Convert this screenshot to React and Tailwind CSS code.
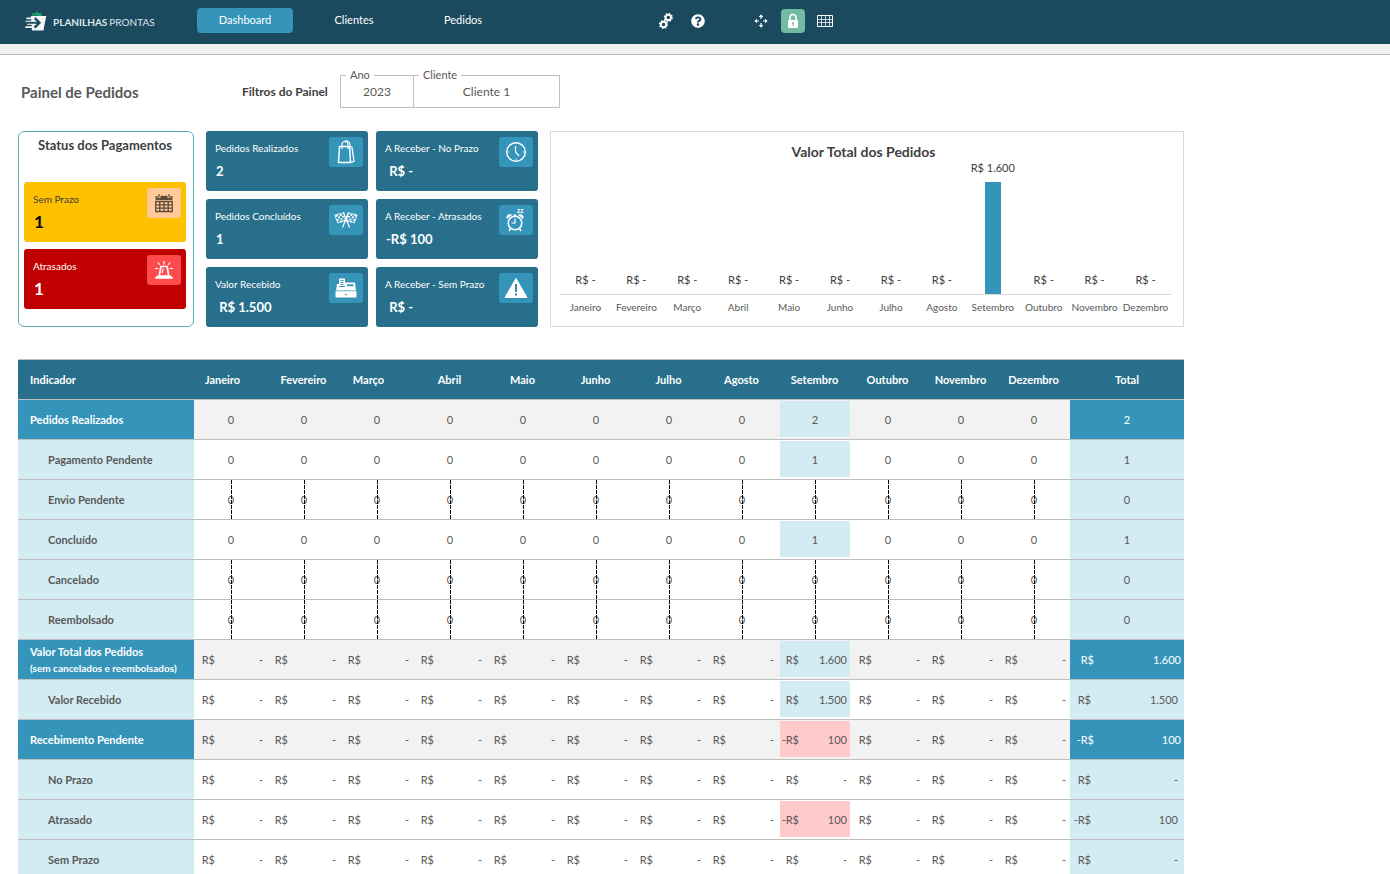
import React, { useState } from "react";
import clsx from "clsx";
import { FaQuestionCircle } from "react-icons/fa";

const MONTHS = [
  "Janeiro",
  "Fevereiro",
  "Março",
  "Abril",
  "Maio",
  "Junho",
  "Julho",
  "Agosto",
  "Setembro",
  "Outubro",
  "Novembro",
  "Dezembro",
];

const SETEMBRO = 8;

const chartValues = MONTHS.map((_, i) => (i === SETEMBRO ? 1600 : 0));

const rows = [
  { label: "Pedidos Realizados", type: "count", value: 2, section: true },
  { label: "Pagamento Pendente", type: "count", value: 1 },
  { label: "Envio Pendente", type: "count", value: 0, struck: true },
  { label: "Concluído", type: "count", value: 1 },
  { label: "Cancelado", type: "count", value: 0, struck: true },
  { label: "Reembolsado", type: "count", value: 0, struck: true },
  {
    label: "Valor Total dos Pedidos",
    note: "(sem cancelados e reembolsados)",
    type: "money",
    value: 1600,
    section: true,
  },
  { label: "Valor Recebido", type: "money", value: 1500 },
  { label: "Recebimento Pendente", type: "money", value: -100, section: true },
  { label: "No Prazo", type: "money", value: 0 },
  { label: "Atrasado", type: "money", value: -100 },
  { label: "Sem Prazo", type: "money", value: 0 },
];

function formatAmount(value) {
  if (value === 0) return "-";
  return String(Math.abs(value)).replace(/\B(?=(\d{3})+$)/g, ".");
}

function LogoIcon() {
  return (
    <svg width="22" height="20" viewBox="0 0 22 20" fill="none">
      <path d="M6.500 4.500 7.500 2 9.500 2.800 11.500.6 13.500 2.200 16 1.500 16.800 5Z" fill="#22a574" />
      <path d="M9 4.500 10.500 3 12 4.500" stroke="#136b55" />
      <path d="M6 5H21.200L18.500 19.500H7Z" fill="#f4f7f8" />
      <path d="M4 11.700H14M9.500 6.800 14.300 11.700 9.500 16.600" stroke="#1b4a5e" strokeWidth="2.600" />
      <path d="M2 7.300H9M1 16.200H8.500" stroke="#f4f7f8" strokeWidth="1.700" strokeLinecap="round" />
      <path d="M.8 10.300H11M2.500 13.300H11" stroke="#f4f7f8" strokeWidth="1.100" strokeLinecap="round" />
    </svg>
  );
}

function GearsIcon() {
  return (
    <svg width="14" height="16" viewBox="0 0 14 16" fill="none" stroke="#fff">
      <circle cx="9.300" cy="4.500" r="2.700" strokeWidth="1.900" />
      <circle cx="9.300" cy="4.500" r="3.900" strokeWidth="1.300" strokeDasharray="1.600 1.460" />
      <circle cx="4.500" cy="11.500" r="2.700" strokeWidth="1.900" />
      <circle cx="4.500" cy="11.500" r="3.900" strokeWidth="1.300" strokeDasharray="1.600 1.460" />
    </svg>
  );
}

function MoveIcon() {
  return (
    <svg width="14" height="14" viewBox="0 0 14 14" fill="#fff">
      <path d="M7 .3 9.300 3H7.600V5H6.400V3H4.700ZM7 13.700 4.700 11H6.400V9H7.600V11H9.300ZM.3 7 3 4.700V6.400H5V7.600H3V9.300ZM13.700 7 11 9.300V7.600H9V6.400H11V4.700Z" />
    </svg>
  );
}

function LockIcon() {
  return (
    <svg width="12" height="16" viewBox="0 0 12 16">
      <path d="M3 8V4.500a3 3 0 0 1 6 0V8" fill="none" stroke="#fff" strokeWidth="1.600" />
      <rect x="1" y="7" width="10" height="8" rx="1" fill="#fff" />
      <circle cx="6" cy="10.200" r="1" fill="#72bba2" />
      <path d="M6 10V13" stroke="#72bba2" strokeWidth="1" />
    </svg>
  );
}

function GridIcon() {
  return (
    <svg width="16" height="12" viewBox="0 0 16 12" fill="none" stroke="#fff">
      <path d="M.5.5H15.500V11.500H.5Z" />
      <path d="M.5 4.500H15.500M.5 7.500H15.500M4.500.5V11.500M8.500.5V11.500M12.500.5V11.500" strokeOpacity=".75" />
    </svg>
  );
}

function CalendarIcon() {
  return (
    <svg width="20" height="20" viewBox="0 0 20 20" fill="none" stroke="#5d4a37">
      <path d="M2 3.500H18V6.500H2Z" fill="#5d4a37" />
      <path d="M5 1V5M15 1V5" stroke="#ffc999" strokeWidth="3" />
      <path d="M5 1V4.500M15 1V4.500M8 2.500V4.500M12 2.500V4.500" strokeWidth="1.200" />
      <path d="M1.700 8.500H18.300V18.500H1.700ZM1.700 11.800H18.300M1.700 15.200H18.300M5.800 8.500V18.500M10 8.500V18.500M14.200 8.500V18.500" strokeWidth="1.300" />
    </svg>
  );
}

function SirenIcon() {
  return (
    <svg width="20" height="20" viewBox="0 0 20 20" fill="none" stroke="#fff">
      <path d="M5.500 15 6.800 6.500H13.200L14.500 15" strokeWidth="1.700" />
      <path d="M9 8.500 8.300 13" strokeWidth="1.200" />
      <path d="M1.500 18.500V17.500L4 15.500H16L18.500 17.500V18.500Z" fill="#fff" strokeWidth=".6" />
      <path d="M10 1V4.500M4 2.500 6 5M16 2.500 14 5M1 8.500H4.500M15.500 8.500H19" strokeWidth="1.200" />
    </svg>
  );
}

function BagIcon() {
  return (
    <svg width="18" height="24" viewBox="0 0 18 24" fill="none" stroke="#fff" strokeLinejoin="round">
      <path d="M2.500 6.500H12.500L13.500 22.500H1.500Z" strokeWidth="1.500" />
      <path d="m12.500 6.500 2.500.8 2 14-3.500 1.200" strokeWidth="1.300" />
      <path d="M5 9V4.500a3 3 0 0 1 6 0V9" strokeWidth="1.200" />
      <path d="M7.500 2C8.500.3 12.500.3 13 4.500V7" strokeWidth="1.100" />
    </svg>
  );
}

function FlagsIcon() {
  return (
    <svg width="24" height="18" viewBox="0 0 24 18" fill="none" stroke="#fff">
      <path d="M9.500 1.500C7 4 4.500 2 .8 4.200L3.800 12C6.500 9.800 9 11.500 12 8.500Z" strokeWidth=".9" />
      <path d="M14.500 1.500C17 4 19.500 2 23.200 4.200L20.200 12C17.500 9.800 15 11.500 12 8.500Z" strokeWidth=".9" />
      <path d="M1.800 5C4.500 3.500 7 4.800 9.500 3M2.800 9.600C5.500 7.800 8 9 10.800 7.200M22.200 5C19.500 3.500 17 4.800 14.500 3M21.200 9.600C18.500 7.800 16 9 13.200 7.200" strokeWidth="1.800" strokeDasharray="2 2" />
      <path d="M2.300 7.300C5 5.600 7.500 6.900 10.200 5M21.700 7.300C19 5.600 16.500 6.900 13.800 5M4 11.500C6.500 9.800 9 11 11.500 9M20 11.500C17.500 9.800 15 11 12.500 9" strokeWidth="1.800" strokeDasharray="2 2" strokeDashoffset="2" />
      <path d="M9.500 1.500 15.500 16.500M14.500 1.500 8.500 16.500" strokeWidth="1.200" />
    </svg>
  );
}

function RegisterIcon() {
  return (
    <svg width="22" height="20" viewBox="0 0 22 20" fill="#fff">
      <path d="M4 .5H10V8H4Z" />
      <path d="M5.500 2.500H8.500M5.500 4.500H8.500M5.500 6.500H8.500" stroke="#3594ba" strokeWidth=".9" />
      <path d="M2 6H4V9H10V4.500H20L21 12.500H1Z" />
      <path d="M12 6.300H18.500V8.200H12Z" fill="#3594ba" />
      <path d="M.5 13.200H21.500V19.500H.5Z" />
      <circle cx="11" cy="16.500" r=".8" fill="#286f8b" />
    </svg>
  );
}

function ClockIcon() {
  return (
    <svg width="22" height="22" viewBox="0 0 22 22" fill="none" stroke="#fff">
      <circle cx="11" cy="11" r="9.300" strokeWidth="1.500" />
      <path d="M10.500 5V11L14 15" strokeWidth="1.200" />
      <path d="M11 17.500V19M3 11H4.300M17.700 11H19" strokeWidth=".8" />
    </svg>
  );
}

function AlarmIcon() {
  return (
    <svg width="22" height="26" viewBox="0 0 22 26" fill="none" stroke="#fff">
      <circle cx="10" cy="16" r="6.800" strokeWidth="1.600" />
      <path d="M10 11.500V16H6.500" strokeWidth="1.200" />
      <path d="M2 11.500C1 8.500 4 6.500 6.500 8ZM18 11.500C19 8.500 16 6.500 13.500 8Z" fill="#fff" strokeWidth=".8" />
      <path d="M8.500 8.300H11.500M5.500 21.500 4 24M14.500 21.500 16 24" strokeWidth="1.500" />
      <text x="12" y="5.500" fontSize="7" fontWeight="700" fill="#fff" stroke="none">
        zz
      </text>
    </svg>
  );
}

function WarningIcon() {
  return (
    <svg width="24" height="22" viewBox="0 0 24 22">
      <path d="M12 1.500 23 20.500H1Z" fill="#fff" stroke="#fff" strokeLinejoin="round" />
      <path d="M12 7V15M12 16.500V18.500" stroke="#286f8b" strokeWidth="1.700" />
    </svg>
  );
}

const statusCards = [
  {
    label: "Sem Prazo",
    value: "1",
    Icon: CalendarIcon,
    card: "bg-[#ffc000] text-[#404040]",
    icon: "bg-[#ffc999]",
    number: "text-black",
  },
  {
    label: "Atrasados",
    value: "1",
    Icon: SirenIcon,
    card: "bg-[#c00000] text-white",
    icon: "bg-[#ff4b4b]",
    number: "text-white",
  },
];

const kpiCards = [
  { label: "Pedidos Realizados", value: "2", Icon: BagIcon },
  { label: "A Receber - No Prazo", value: " R$ -", Icon: ClockIcon },
  { label: "Pedidos Concluídos", value: "1", Icon: FlagsIcon },
  { label: "A Receber - Atrasados", value: "-R$ 100", Icon: AlarmIcon },
  { label: "Valor Recebido", value: " R$ 1.500", Icon: RegisterIcon },
  { label: "A Receber - Sem Prazo", value: " R$ -", Icon: WarningIcon },
];

function Card({ label, value, Icon, className, iconClass, valueClass }) {
  return (
    <div className={clsx("flex h-[60px] justify-between rounded-[3px] pl-[9px] pr-[5px]", className)}>
      <div className="pt-[9px]">
        <p className="whitespace-nowrap text-[10px] leading-4">{label}</p>
        <p className={clsx("mt-[5px] whitespace-pre pl-px font-bold leading-5", valueClass)}>{value}</p>
      </div>
      <span className={clsx("mt-1.5 flex h-[30px] w-[34px] shrink-0 items-center justify-center rounded-[3px]", iconClass)}>
        <Icon />
      </span>
    </div>
  );
}

function Header() {
  const [page, setPage] = useState("Dashboard");

  return (
    <header className="flex h-11 shrink-0 items-start bg-[#1b4a5e] pl-[25px] text-white">
      <a href="#inicio" className="mt-2.5 flex w-[172px] shrink-0 items-center gap-1.5 text-[#dfe7ea]">
        <LogoIcon />
        <span className="flex gap-0.5 pt-0.5 text-[10px] leading-5">
          <b>PLANILHAS</b>
          <span>PRONTAS</span>
        </span>
      </a>
      <nav className="mt-2 flex gap-[13px]">
        {["Dashboard", "Clientes", "Pedidos"].map((name) => (
          <button
            key={name}
            type="button"
            onClick={() => setPage(name)}
            className={clsx("h-[25px] w-24 rounded text-[11px]", page === name && "bg-[#3594ba]")}
          >
            {name}
          </button>
        ))}
      </nav>
      <div className="ml-[143px] mt-[9px] flex gap-2">
        <button type="button" aria-label="Configurações" className="flex size-6 items-center justify-center">
          <GearsIcon />
        </button>
        <button type="button" aria-label="Ajuda" className="flex size-6 items-center justify-center">
          <FaQuestionCircle size={14} />
        </button>
      </div>
      <div className="ml-[39px] mt-[9px] flex gap-2">
        <button type="button" aria-label="Mover" className="flex size-6 items-center justify-center">
          <MoveIcon />
        </button>
        <button type="button" aria-label="Bloquear" className="flex size-6 items-center justify-center rounded bg-[#72bba2]">
          <LockIcon />
        </button>
        <button type="button" aria-label="Grade" className="flex size-6 items-center justify-center">
          <GridIcon />
        </button>
      </div>
    </header>
  );
}

function Filter({ id, label, value, className }) {
  return (
    <fieldset className={clsx("h-[41px] border border-[#bfbfbf] px-[5px]", className)}>
      <legend className="px-1 text-[11px] leading-4 text-[#595959]">
        <label htmlFor={id}>{label}</label>
      </legend>
      <select
        id={id}
        defaultValue={value}
        className="block h-[18px] w-full appearance-none text-[12px] leading-[18px] text-[#595959] [text-align-last:center]"
      >
        <option>{value}</option>
      </select>
    </fieldset>
  );
}

function OrdersChart() {
  const max = Math.max(...chartValues);

  return (
    <section className="flex min-w-0 flex-1 flex-col border border-[#d9d9d9] pl-[9px] pr-3 pt-3">
      <h2 className="pr-1 text-center text-[14px] font-bold leading-4 text-[#404040]">Valor Total dos Pedidos</h2>
      <div className="grid flex-1 grid-cols-12 border-b border-[#d9d9d9]">
        {chartValues.map((value, i) => (
          <div key={MONTHS[i]} className="flex flex-col items-center justify-end">
            <span className="mb-1.5 whitespace-nowrap text-[11px] leading-4 text-[#404040]">R$ {formatAmount(value)}</span>
            <div className="w-4 bg-[#3594ba]" style={{ height: `${(value / max) * 112}px` }} />
          </div>
        ))}
      </div>
      <div className="grid grid-cols-12 pb-[11px] pt-1">
        {MONTHS.map((month) => (
          <span key={month} className="text-center text-[10px] leading-4 text-[#595959]">
            {month}
          </span>
        ))}
      </div>
    </section>
  );
}

function MonthCell({ row, value }) {
  const filled = value !== 0;
  const money = row.type === "money";

  return (
    <td className={clsx("relative border-b border-[#bfbfbf] p-0", row.section && "bg-[#f2f2f2]")}>
      <div
        className={clsx(
          "mb-0.5 ml-0.5 mr-px mt-px flex h-9 items-center pt-0.5",
          money ? "justify-between pr-[3px]" : "justify-center",
          filled && (value < 0 ? "bg-[#ffcaca]" : "bg-[#d3ebf3]")
        )}
      >
        {money ? <span className="w-[19px] whitespace-nowrap text-right">{value < 0 ? "-R$" : "R$"}</span> : null}
        <span>{money ? formatAmount(value) : value}</span>
      </div>
      {row.struck ? (
        <span className="absolute inset-y-0 left-1/2 w-px bg-[repeating-linear-gradient(to_bottom,#000_0px,#000_4px,transparent_4px,transparent_5px)]" />
      ) : null}
    </td>
  );
}

function IndicatorsTable() {
  return (
    <table className="mt-8 w-full table-fixed border-separate border-spacing-0 text-[11px] leading-4 text-[#595959]">
      <colgroup>
        <col className="w-[176px]" />
        {MONTHS.map((month) => (
          <col key={month} />
        ))}
        <col className="w-[114px]" />
      </colgroup>
      <thead>
        <tr className="bg-[#286f8b] text-white">
          <th className="h-[41px] border-y border-[#bfbfbf] p-0 pl-3 text-left">Indicador</th>
          {MONTHS.map((month) => (
            <th
              key={month}
              className={clsx(
                "border-y border-[#bfbfbf] p-0 text-center",
                (month === "Janeiro" || month === "Março") && "pr-4"
              )}
            >
              {month}
            </th>
          ))}
          <th className="border-y border-[#bfbfbf] p-0 text-center">Total</th>
        </tr>
      </thead>
      <tbody>
        {rows.map((row) => {
          const tone = row.section ? "bg-[#3594ba] text-white" : "bg-[#d3ebf3]";
          return (
            <tr key={row.label}>
              <th className={clsx("h-10 border-b border-[#bfbfbf] p-0 text-left", tone, row.section ? "pl-3" : "pl-[30px]")}>
                {row.label}
                {row.note ? <span className="block whitespace-nowrap text-[10px] leading-4">{row.note}</span> : null}
              </th>
              {MONTHS.map((month, i) => (
                <MonthCell key={month} row={row} value={i === SETEMBRO ? row.value : 0} />
              ))}
              <td className={clsx("border-b border-[#bfbfbf] p-0", tone)}>
                {row.type === "money" ? (
                  <div className={clsx("flex justify-between", row.section ? "pl-1 pr-[3px]" : "pl-px pr-1.5")}>
                    <span className="w-5 whitespace-nowrap text-right">{row.value < 0 ? "-R$" : "R$"}</span>
                    <span>{formatAmount(row.value)}</span>
                  </div>
                ) : (
                  <div className="text-center">{row.value}</div>
                )}
              </td>
            </tr>
          );
        })}
      </tbody>
    </table>
  );
}

function App() {
  return (
    <div className="flex h-screen flex-col overflow-hidden bg-white font-['Lato','Liberation_Sans',sans-serif]">
      <Header />
      <div className="h-[11px] shrink-0 border-b border-[#b5b5b5] bg-[#f0f0f0]" />
      <main className="min-h-0 flex-1 overflow-y-auto pl-[18px] [scrollbar-width:none]">
        <div className="w-full max-w-[1166px]">
          <div className="flex items-end pt-3">
            <h1 className="w-[224px] pl-[3px] text-[15px] font-bold leading-8 text-[#595959]">Painel de Pedidos</h1>
            <p className="w-[98px] whitespace-nowrap text-[12px] font-bold leading-8 text-[#404040]">Filtros do Painel</p>
            <Filter id="ano" label="Ano" value="2023" className="w-[74px]" />
            <Filter id="cliente" label="Cliente" value="Cliente 1" className="-ml-px w-[147px]" />
          </div>

          <div className="mt-[23px] flex gap-3">
            <section className="w-[176px] shrink-0 rounded-md border border-[#5bb0b0] pl-[5px] pr-[7px] pt-[5px]">
              <h2 className="text-center text-[13px] font-bold leading-4 text-[#404040]">Status dos Pagamentos</h2>
              <div className="mt-[29px] grid gap-[7px]">
                {statusCards.map((item) => (
                  <Card
                    key={item.label}
                    label={item.label}
                    value={item.value}
                    Icon={item.Icon}
                    className={item.card}
                    iconClass={item.icon}
                    valueClass={clsx("text-[17px]", item.number)}
                  />
                ))}
              </div>
            </section>

            <section className="grid shrink-0 grid-cols-[162px_162px] gap-2">
              {kpiCards.map((item) => (
                <Card
                  key={item.label}
                  label={item.label}
                  value={item.value}
                  Icon={item.Icon}
                  className="bg-[#286f8b] text-white"
                  iconClass="bg-[#3594ba]"
                  valueClass="text-[13px]"
                />
              ))}
            </section>

            <OrdersChart />
          </div>

          <IndicatorsTable />
        </div>
      </main>
    </div>
  );
}

export default App;
